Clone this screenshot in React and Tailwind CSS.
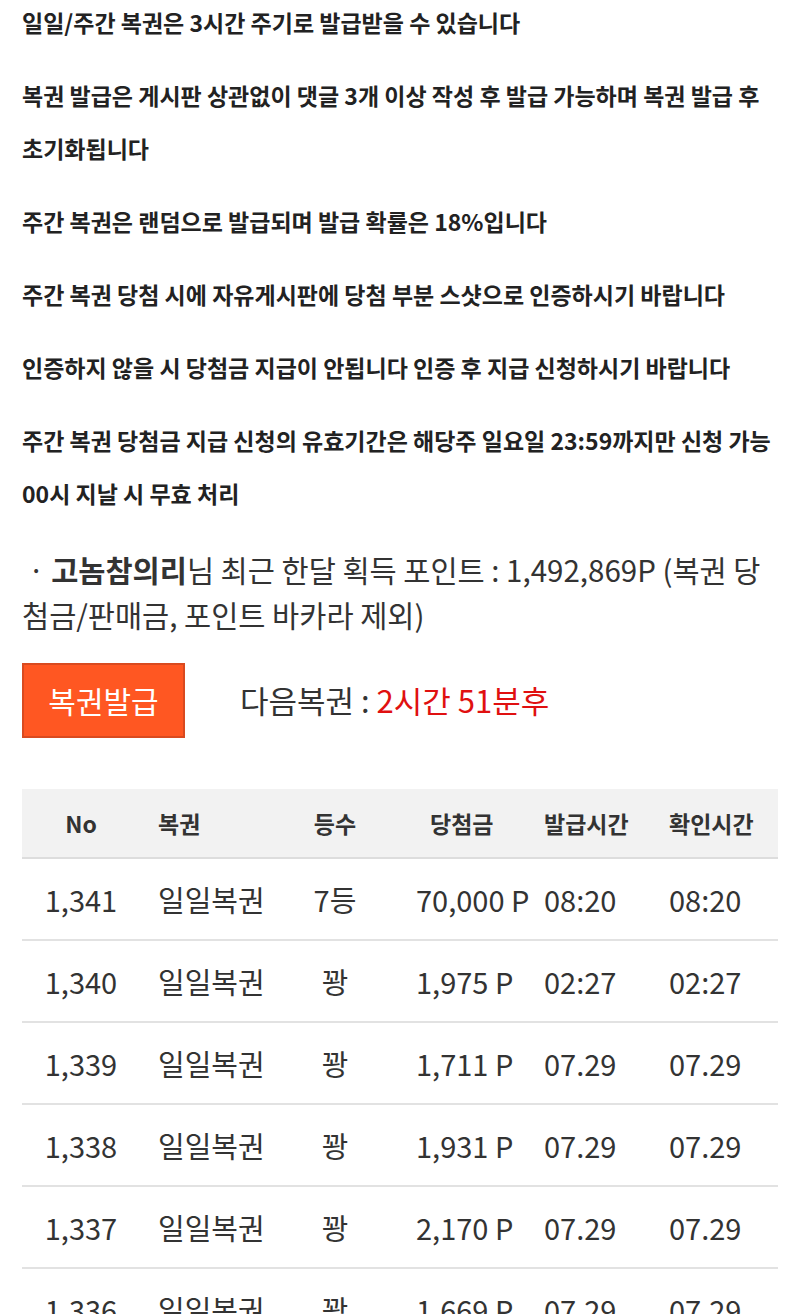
import React from 'react';

const notices = [
  '일일/주간 복권은 3시간 주기로 발급받을 수 있습니다',
  '복권 발급은 게시판 상관없이 댓글 3개 이상 작성 후 발급 가능하며 복권 발급 후 초기화됩니다',
  '주간 복권은 랜덤으로 발급되며 발급 확률은 18%입니다',
  '주간 복권 당첨 시에 자유게시판에 당첨 부분 스샷으로 인증하시기 바랍니다',
  '인증하지 않을 시 당첨금 지급이 안됩니다 인증 후 지급 신청하시기 바랍니다',
  '주간 복권 당첨금 지급 신청의 유효기간은 해당주 일요일 23:59까지만 신청 가능 00시 지날 시 무효 처리',
];

const rows = [
  { no: '1,341', name: '일일복권', rank: '7등', prize: '70,000 P', issued: '08:20', checked: '08:20' },
  { no: '1,340', name: '일일복권', rank: '꽝', prize: '1,975 P', issued: '02:27', checked: '02:27' },
  { no: '1,339', name: '일일복권', rank: '꽝', prize: '1,711 P', issued: '07.29', checked: '07.29' },
  { no: '1,338', name: '일일복권', rank: '꽝', prize: '1,931 P', issued: '07.29', checked: '07.29' },
  { no: '1,337', name: '일일복권', rank: '꽝', prize: '2,170 P', issued: '07.29', checked: '07.29' },
  { no: '1,336', name: '일일복권', rank: '꽝', prize: '1,669 P', issued: '07.29', checked: '07.29' },
];

const cols = 'grid grid-cols-[118px_150px_90px_154px_122px_122px] items-center';

const App = () => {
  return (
    <div
      className="h-[1314px] overflow-hidden bg-white px-[22px]"
      style={{ fontFamily: '"Noto Sans CJK KR", "Noto Sans", sans-serif' }}
    >
      {/* Notice list */}
      <div className="mt-[-4px]">
        {notices.map((text, i) => (
          <p key={i} className="mb-[20px] break-keep text-[23px] font-bold leading-[53px] text-[#222]">
            {text}
          </p>
        ))}
      </div>

      {/* Monthly points */}
      <p className="mt-[27px] indent-[6px] text-[29.5px] leading-[45px] text-[#333]">
        · <span className="font-bold">고놈참의리</span>님 최근 한달 획득 포인트 : 1,492,869P (복권 당첨금/판매금, 포인트 바카라 제외)
      </p>

      {/* Issue button */}
      <div className="mt-[26px] flex items-center">
        <button className="h-[75px] w-[163px] border-2 border-[#d94a1f] bg-[#ff5722] text-[30px] text-white">
          복권발급
        </button>
        <div className="ml-[55px] text-[31px] text-[#333]">
          다음복권 : <span className="text-[#e01010]">2시간 51분후</span>
        </div>
      </div>

      {/* History table */}
      <div className="mt-[51px]">
        <div className={`${cols} h-[70px] border-b-2 border-[#dddddd] bg-[#f2f2f2] text-[23px] font-bold text-[#333]`}>
          <div className="text-center">No</div>
          <div className="pl-[18px]">복권</div>
          <div className="text-center">등수</div>
          <div className="pl-[50px]">당첨금</div>
          <div className="pl-[10px]">발급시간</div>
          <div className="pl-[13px]">확인시간</div>
        </div>
        {rows.map((r) => (
          <div
            key={r.no}
            className={`${cols} h-[82px] border-b-2 border-[#e2e2e2] pt-[2px] text-[29px] text-[#333]`}
          >
            <div className="text-center">{r.no}</div>
            <div className="pl-[18px]">{r.name}</div>
            <div className="text-center">{r.rank}</div>
            <div className="whitespace-nowrap pl-[36px]">{r.prize}</div>
            <div className="pl-[10px]">{r.issued}</div>
            <div className="pl-[13px]">{r.checked}</div>
          </div>
        ))}
      </div>
    </div>
  );
};

export default App;
